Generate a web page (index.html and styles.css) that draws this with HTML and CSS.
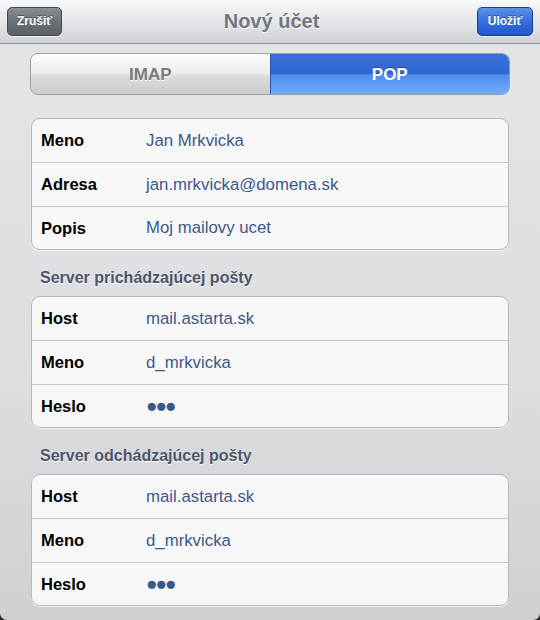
FILE: index.html
```html
<!DOCTYPE html>
<html lang="sk">
<head>
	<meta charset="UTF-8">
	<title>Nový účet</title>
	<link rel="stylesheet" href="styles.css">
</head>
<body>
	<div class="sheet">
		<div class="navBar">
			<a class="navBtn btnCancel">Zrušiť</a>
			<h1 class="navTitle">Nový účet</h1>
			<a class="navBtn btnSave">Uložiť</a>
		</div>

		<div class="content">
			<div class="segment">
				<div class="segItem">IMAP</div>
				<div class="segItem segActive">POP</div>
			</div>

			<ul class="group firstGroup">
				<li><span class="label">Meno</span><span class="value">Jan Mrkvicka</span></li>
				<li><span class="label">Adresa</span><span class="value">jan.mrkvicka@domena.sk</span></li>
				<li><span class="label">Popis</span><span class="value">Moj mailovy ucet</span></li>
			</ul>

			<h2 class="groupHead">Server prichádzajúcej pošty</h2>
			<ul class="group">
				<li><span class="label">Host</span><span class="value">mail.astarta.sk</span></li>
				<li><span class="label">Meno</span><span class="value">d_mrkvicka</span></li>
				<li><span class="label">Heslo</span><span class="value dots">&#9679;&#9679;&#9679;</span></li>
			</ul>

			<h2 class="groupHead">Server odchádzajúcej pošty</h2>
			<ul class="group">
				<li><span class="label">Host</span><span class="value">mail.astarta.sk</span></li>
				<li><span class="label">Meno</span><span class="value">d_mrkvicka</span></li>
				<li><span class="label">Heslo</span><span class="value dots">&#9679;&#9679;&#9679;</span></li>
			</ul>
		</div>
	</div>
</body>
</html>
```

FILE: styles.css
```css
*{
	margin: 0px;
	padding: 0px;
	list-style: none;
	box-sizing: border-box;
}
body{
	width: 540px;
	height: 620px;
	overflow: hidden;
	background: #2a2b2e;
	font-family: "Liberation Sans", Arial, sans-serif;
}
.sheet{
	height: 620px;
	border-radius: 0 0 7px 7px;
	overflow: hidden;
	background: linear-gradient(#e3e5e9, #dcdee2 60%, #cfd0d4);
}

/* nav bar */
.navBar{
	height: 44px;
	display: flex;
	align-items: center;
	justify-content: space-between;
	padding: 0 7px;
	background: linear-gradient(#f7f8f9, #e4e6e9 50%, #cfd2d7);
	border-bottom: 1px solid #8d9299;
}
.navTitle{
	font-size: 20px;
	font-weight: bold;
	color: #71767d;
	text-shadow: 0 1px 0 #fff;
	padding-left: 4px;
}
.navBtn{
	height: 29px;
	margin-top: -1px;
	display: flex;
	align-items: center;
	justify-content: center;
	font-size: 12px;
	font-weight: bold;
	color: #fff;
	text-shadow: 0 -1px 0 rgba(0,0,0,0.4);
	border-radius: 5px;
	box-shadow: 0 1px 0 rgba(255,255,255,0.6);
}
.btnCancel{
	width: 55px;
	background: linear-gradient(#8a8e95, #6c7077 50%, #5c6067);
	border: 1px solid #44474c;
}
.btnSave{
	width: 56px;
	background: linear-gradient(#5b91e8, #3570dc 50%, #1f58d0);
	border: 1px solid #1c3d86;
}

/* content */
.content{
	padding: 9px 30px 0 30px;
}
.segment{
	display: flex;
	height: 42px;
	border: 1px solid #9c9ea2;
	border-radius: 8px;
	overflow: hidden;
}
.segItem{
	flex: 1;
	display: flex;
	align-items: center;
	justify-content: center;
	padding-top: 1px;
	font-size: 17px;
	font-weight: bold;
	color: #7b7b7b;
	text-shadow: 0 1px 0 #fff;
	background: linear-gradient(#fdfdfd, #ececec 50%, #dedede 52%, #cbcbcb);
}
.segActive{
	color: #fff;
	text-shadow: 0 -1px 0 rgba(0,0,0,0.3);
	background: linear-gradient(#3a70d8, #2f68d6 50%, #4f8cec 52%, #72acf9);
	border-left: 1px solid #2a58b0;
}

.group{
	margin: 0 1px;
	background: #f7f7f7;
	border: 1px solid #b7b9be;
	border-radius: 9px;
	box-shadow: 0 1px 0 #f2f3f5;
}
.firstGroup{
	margin-top: 23px;
}
.group li{
	height: 44px;
	display: flex;
	align-items: center;
	padding-left: 9px;
	border-bottom: 1px solid #c9c9cb;
}
.group li:last-child{
	height: 42px;
	border-bottom: none;
}
.label{
	width: 105px;
	font-size: 16.5px;
	font-weight: bold;
	color: #000;
}
.value{
	font-size: 16.8px;
	color: #3d5789;
}
.dots{
	font-size: 19px;
	letter-spacing: -2px;
	color: #3b568a;
}
.groupHead{
	height: 46px;
	padding: 19px 0 0 10px;
	font-size: 16px;
	line-height: 18px;
	font-weight: bold;
	color: #4c556a;
	text-shadow: 0 1px 0 #fff;
}
```
